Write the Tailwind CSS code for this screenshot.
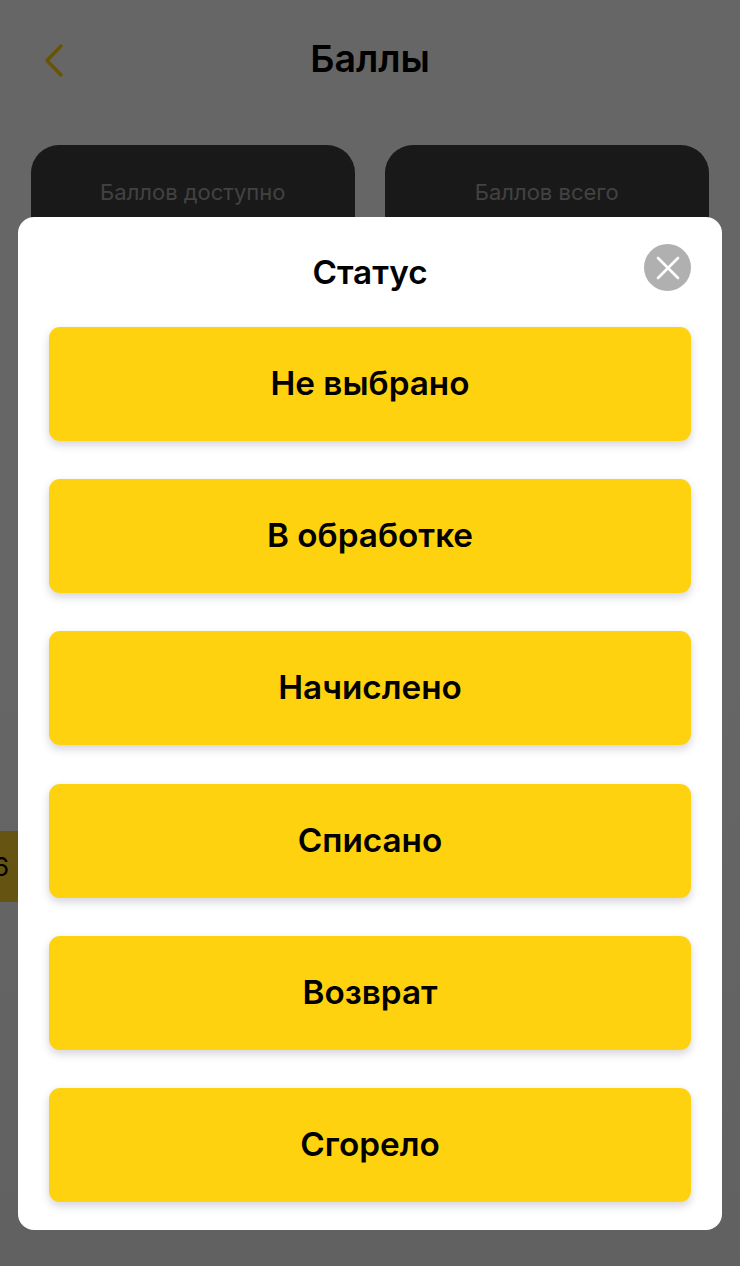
<!DOCTYPE html>
<html lang="ru">
  <head>
    <meta charset="UTF-8" />
    <meta name="viewport" content="width=device-width, initial-scale=1.0" />
    <title>Баллы</title>
    <script src="https://cdn.jsdelivr.net/npm/@tailwindcss/browser@4"></script>
  </head>
  <body class="bg-white font-['Inter','Liberation_Sans',sans-serif] overflow-hidden">
    <div class="relative h-[1266px] w-[740px] overflow-hidden">
      <!-- Page behind the dialog -->
      <div class="h-full">
        <header class="relative flex h-[118px] items-center justify-center">
          <svg class="absolute left-[42px] top-[43px] h-[34px] w-[24px]" viewBox="0 0 24 34" fill="none" stroke="#ffd210" stroke-width="3.4" stroke-linecap="round" stroke-linejoin="round">
            <path d="M19 3 5 17.5 19 32" />
          </svg>
          <h1 class="text-[37.5px] font-semibold text-black">Баллы</h1>
        </header>

        <div class="mt-[27px] flex gap-[30.5px] pl-[31px]">
          <div class="h-[240px] w-[323.5px] rounded-[28px] bg-[#3f3f3f] pt-[31px] text-center text-[22px] text-[#a4a4a4]">Баллов доступно</div>
          <div class="h-[240px] w-[323.5px] rounded-[28px] bg-[#3f3f3f] pt-[31px] text-center text-[22px] text-[#a4a4a4]">Баллов всего</div>
        </div>

        <div class="mt-[446px] flex h-[71px] w-[200px] items-center bg-[#ffd42c] text-[26px] text-black">
          <span class="-ml-[7px]">6</span>
        </div>
      </div>

      <!-- Overlay -->
      <div class="absolute inset-0 bg-linear-to-b from-black/60 via-black/60 to-black/62"></div>

      <!-- Status dialog -->
      <div class="absolute left-[18px] top-[217px] w-[704px] rounded-[16px] bg-white px-[31px] pb-[28px]">
        <div class="relative flex h-[110px] items-center justify-center pt-[1px]">
          <h2 class="text-[33.3px] font-semibold text-black">Статус</h2>
          <button class="absolute right-0 top-[27px] flex h-[47px] w-[47px] items-center justify-center rounded-full bg-[#b0b0b0]">
            <svg class="h-[24px] w-[24px]" viewBox="0 0 24 24" fill="none" stroke="#ffffff" stroke-width="2.6" stroke-linecap="round">
              <path d="M2 2 22 22M22 2 2 22" />
            </svg>
          </button>
        </div>

        <div class="flex flex-col gap-[38.2px]">
          <button class="flex h-[114px] items-center justify-center rounded-[11px] bg-[#ffd210] text-[33.3px] font-semibold text-black shadow-[0_4px_8px_rgba(60,60,90,0.22)]">Не выбрано</button>
          <button class="flex h-[114px] items-center justify-center rounded-[11px] bg-[#ffd210] text-[33.3px] font-semibold text-black shadow-[0_4px_8px_rgba(60,60,90,0.22)]">В обработке</button>
          <button class="flex h-[114px] items-center justify-center rounded-[11px] bg-[#ffd210] text-[33.3px] font-semibold text-black shadow-[0_4px_8px_rgba(60,60,90,0.22)]">Начислено</button>
          <button class="flex h-[114px] items-center justify-center rounded-[11px] bg-[#ffd210] text-[33.3px] font-semibold text-black shadow-[0_4px_8px_rgba(60,60,90,0.22)]">Списано</button>
          <button class="flex h-[114px] items-center justify-center rounded-[11px] bg-[#ffd210] text-[33.3px] font-semibold text-black shadow-[0_4px_8px_rgba(60,60,90,0.22)]">Возврат</button>
          <button class="flex h-[114px] items-center justify-center rounded-[11px] bg-[#ffd210] text-[33.3px] font-semibold text-black shadow-[0_4px_8px_rgba(60,60,90,0.22)]">Сгорело</button>
        </div>
      </div>
    </div>
  </body>
</html>
